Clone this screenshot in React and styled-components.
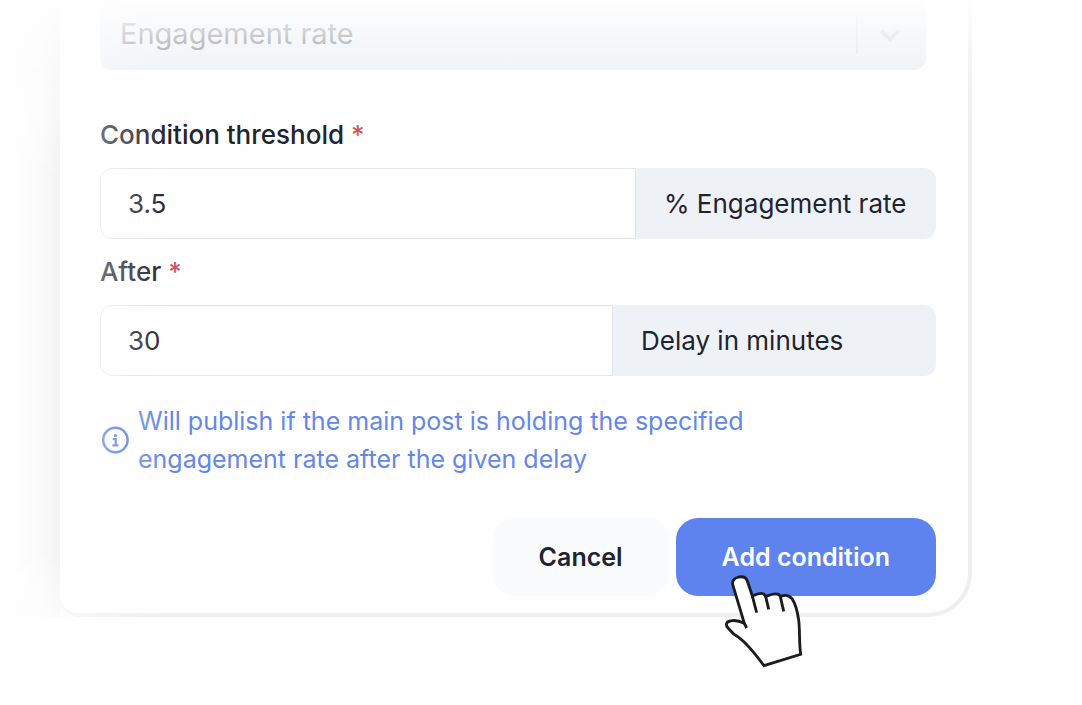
import React from "react"
import styled, { createGlobalStyle } from "styled-components"

const GlobalStyle = createGlobalStyle`
  *, *::before, *::after {
    box-sizing: border-box;
  }
  body {
    margin: 0;
    background: #fefefe;
    color: #1f2430;
    font-family: Inter, "Liberation Sans", sans-serif;
    font-size: 26px;
    line-height: 32px;
  }
  input, select, button {
    margin: 0;
    color: inherit;
    font: inherit;
  }
`

const Page = styled.main`
  position: relative;
  padding: 0 110px 88px 60px;
  overflow: hidden;
`

const Card = styled.form`
  position: relative;
  padding: 0 32px 17px 40px;
  background: #fefefe;
  border-right: 4px solid #efeff2;
  border-bottom: 4px solid #efeff2;
  border-radius: 0 0 44px 20px;

  /* soft shadow along the left edge */
  &::before {
    content: "";
    position: absolute;
    z-index: -1;
    top: 0;
    bottom: -4px;
    left: -46px;
    width: 66px;
    background: linear-gradient(to right, #fefefe, #fafafa 28px, #f2f2f3 46px);
    mask-image: linear-gradient(transparent, #000 180px, #000 calc(100% - 70px), rgba(0, 0, 0, 0.3));
  }

  /* fades the form out towards the top */
  &::after {
    content: "";
    position: absolute;
    top: 0;
    left: 0;
    right: -4px;
    height: 120px;
    background: linear-gradient(
      #fefefe,
      rgba(254, 254, 254, 0.6) 35px,
      rgba(254, 254, 254, 0.25) 70px,
      rgba(254, 254, 254, 0)
    );
    pointer-events: none;
  }
`

const SideFade = styled.div`
  position: absolute;
  z-index: 1;
  top: 0;
  bottom: -4px;
  left: 0;
  width: 110px;
  background: linear-gradient(to right, rgba(254, 254, 254, 0.55), rgba(254, 254, 254, 0));
  pointer-events: none;
`

const SelectBox = styled.div`
  position: relative;
  margin-right: 10px;
  margin-bottom: 49px;
`

const Select = styled.select`
  display: block;
  width: 100%;
  height: 70px;
  padding: 0 80px 2px 20px;
  appearance: none;
  background: #eceff5;
  border: 0;
  border-radius: 12px;
  color: #7c7f86;
  font-size: 29px;
  opacity: 1;
`

const SelectArrow = styled.span`
  position: absolute;
  top: 16px;
  right: 0;
  display: flex;
  align-items: center;
  justify-content: center;
  width: 70px;
  height: 37px;
  padding-right: 4px;
  border-left: 2px solid #dcdee2;
  color: #d2d5da;
  pointer-events: none;
`

const Field = styled.div`
  margin-bottom: 17px;
`

const Label = styled.label`
  display: block;
  margin-bottom: 17px;
  font-weight: 500;
`

const Required = styled.span`
  color: #cf5560;
`

const InputGroup = styled.div`
  display: flex;
  height: 71px;
`

const Input = styled.input`
  flex: 1;
  min-width: 0;
  padding: 0 27px;
  background: #fff;
  border: 1px solid #e2e5ec;
  border-radius: 12px 0 0 12px;
  outline: none;
`

const Addon = styled.span`
  display: flex;
  align-items: center;
  min-width: ${({ $wide }) => ($wide ? "323px" : "300px")};
  padding: 0 28px;
  background: #eef1f6;
  border-radius: 0 12px 12px 0;
  white-space: nowrap;
`

const Hint = styled.p`
  display: flex;
  align-items: center;
  gap: 8px;
  max-width: 680px;
  margin: 26px 0 40px;
  color: #6487e8;
  font-size: 25px;
  line-height: 38px;

  svg {
    flex: none;
    color: #5078e6;
  }
`

const Actions = styled.div`
  display: flex;
  justify-content: flex-end;
  gap: 7px;
`

const Button = styled.button`
  height: 78px;
  padding: 0 46px;
  background: ${({ $primary }) => ($primary ? "#5e82ee" : "#f9fbfc")};
  border: 0;
  border-radius: 22px;
  color: ${({ $primary }) => ($primary ? "#fff" : "#1f2430")};
  font-size: 25px;
  font-weight: 600;
  white-space: nowrap;
  cursor: pointer;
`

const PointerTarget = styled.div`
  position: relative;
`

const Hand = styled.svg`
  position: absolute;
  top: 54px;
  left: 44px;
  width: 87px;
  height: 99px;
  pointer-events: none;
`

const Chevron = () => (
  <svg width="22" height="14" viewBox="0 0 22 14" fill="none" aria-hidden="true">
    <path d="M2 2.5 11 11l9-8.5" stroke="currentColor" strokeWidth="4" />
  </svg>
)

const InfoIcon = () => (
  <svg width="30" height="30" viewBox="0 0 30 30" fill="none" aria-hidden="true">
    <circle cx="15.4" cy="15" r="12.2" stroke="currentColor" strokeWidth="2.4" />
    <circle cx="15.5" cy="10.6" r="1.6" fill="currentColor" />
    <path d="M12.7 14.2h3v6M12.4 20.3h6" stroke="currentColor" strokeWidth="2.2" />
  </svg>
)

const PointerHand = () => (
  <Hand viewBox="60 216 261 297" aria-hidden="true">
    <path
      d="M192 497 302 463C297 428 300 392 296 360C292 333 285 309 276 296C268 286 255 284 241 289C237 279 225 278 197 289C191 277 180 278 157 288L142 243C138 231 128 229 116 231C101 235 95 243 99 257L133 370C119 363 105 359 91 363C78 366 76 374 84 384L102 403C134 421 164 460 192 497Z"
      fill="#fefefe"
      stroke="#1c1c1c"
      strokeWidth="8.5"
      strokeLinejoin="miter"
    />
    <path
      d="M133 370 140 384M157 288 170 338M197 289 206 328M241 289 251 334"
      fill="none"
      stroke="#1c1c1c"
      strokeWidth="8.5"
    />
  </Hand>
)

const NumberField = ({ id, label, value, unit, wide }) => (
  <Field>
    <Label htmlFor={id}>
      {label} <Required>*</Required>
    </Label>
    <InputGroup>
      <Input id={id} type="text" inputMode="decimal" defaultValue={value} required />
      <Addon $wide={wide}>{unit}</Addon>
    </InputGroup>
  </Field>
)

const App = () => {
  return (
    <>
      <GlobalStyle />
      <Page>
        <Card onSubmit={e => e.preventDefault()}>
          <SideFade />
          <SelectBox>
            <Select aria-label="Condition" defaultValue="engagement">
              <option value="engagement">Engagement rate</option>
            </Select>
            <SelectArrow>
              <Chevron />
            </SelectArrow>
          </SelectBox>
          <NumberField
            id="threshold"
            label="Condition threshold"
            value="3.5"
            unit="% Engagement rate"
          />
          <NumberField id="delay" label="After" value="30" unit="Delay in minutes" wide />
          <Hint>
            <InfoIcon />
            <span>
              Will publish if the main post is holding the specified engagement rate
              after the given delay
            </span>
          </Hint>
          <Actions>
            <Button type="button">Cancel</Button>
            <PointerTarget>
              <Button type="submit" $primary>
                Add condition
              </Button>
              <PointerHand />
            </PointerTarget>
          </Actions>
        </Card>
      </Page>
    </>
  )
}

export default App
